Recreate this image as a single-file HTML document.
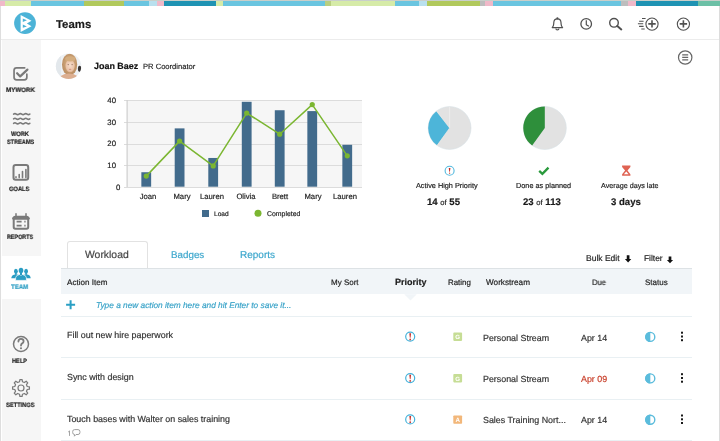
<!DOCTYPE html><html><head><meta charset="utf-8"><style>
html,body{margin:0;padding:0;}
body{width:720px;height:441px;overflow:hidden;position:relative;background:#fff;font-family:"Liberation Sans",sans-serif;text-rendering:geometricPrecision;}
.t{position:absolute;line-height:1;white-space:nowrap;will-change:transform;-webkit-text-stroke:0.18px currentColor;}
.r{position:absolute;display:block;}
</style></head><body>
<div class="r" style="left:0px;top:0px;width:720px;height:1px;background:#c9cfca;"></div>
<div class="r" style="left:0px;top:1px;width:5px;height:5px;background:#f0b9c9;"></div>
<div class="r" style="left:5px;top:1px;width:26px;height:5px;background:#d6eba8;"></div>
<div class="r" style="left:31px;top:1px;width:53px;height:5px;background:#6ac5e0;"></div>
<div class="r" style="left:84px;top:1px;width:40px;height:5px;background:#b1c95c;"></div>
<div class="r" style="left:124px;top:1px;width:25px;height:5px;background:#6ac5e0;"></div>
<div class="r" style="left:149px;top:1px;width:8px;height:5px;background:#b9e0ee;"></div>
<div class="r" style="left:157px;top:1px;width:7px;height:5px;background:#f0b9c9;"></div>
<div class="r" style="left:164px;top:1px;width:52px;height:5px;background:#1f93b3;"></div>
<div class="r" style="left:216px;top:1px;width:7px;height:5px;background:#d6eba8;"></div>
<div class="r" style="left:223px;top:1px;width:102px;height:5px;background:#6ac5e0;"></div>
<div class="r" style="left:325px;top:1px;width:6px;height:5px;background:#b9cf80;"></div>
<div class="r" style="left:331px;top:1px;width:63.5px;height:5px;background:#d6eba8;"></div>
<div class="r" style="left:394.5px;top:1px;width:24.5px;height:5px;background:#6ac5e0;"></div>
<div class="r" style="left:419px;top:1px;width:8px;height:5px;background:#b9e0ee;"></div>
<div class="r" style="left:427px;top:1px;width:53px;height:5px;background:#b1c95c;"></div>
<div class="r" style="left:480px;top:1px;width:5px;height:5px;background:#bdbdbd;"></div>
<div class="r" style="left:485px;top:1px;width:7.5px;height:5px;background:#f0b9c9;"></div>
<div class="r" style="left:492.5px;top:1px;width:128.5px;height:5px;background:#6ac5e0;"></div>
<div class="r" style="left:621px;top:1px;width:7px;height:5px;background:#bdbdbd;"></div>
<div class="r" style="left:628px;top:1px;width:7.5px;height:5px;background:#f0b9c9;"></div>
<div class="r" style="left:635.5px;top:1px;width:62.5px;height:5px;background:#1f93b3;"></div>
<div class="r" style="left:698px;top:1px;width:22px;height:5px;background:#6cc0a6;"></div>
<div class="r" style="left:0px;top:39px;width:720px;height:1px;background:#ececec;"></div>
<div class="r" style="left:719px;top:6px;width:1px;height:435px;background:#dcdcdc;"></div>
<div class="r" style="left:0px;top:6px;width:1px;height:435px;background:#dedede;"></div>
<div class="r" style="left:2px;top:40px;width:39px;height:401px;background:#f6f6f6;"></div>
<div class="r" style="left:2px;top:256px;width:39px;height:43px;background:#ffffff;"></div>
<svg class="r" style="left:0px;top:0px" width="50" height="40" viewBox="0 0 50 40"><circle cx="25" cy="23.1" r="10.9" fill="#4cb3d7"/><path d="M20.62 15.08 L31.5 20.8 L26.88 23.52 L31.5 26.24 L20.62 31.95 Z" fill="#fff"/><path d="M22.8 18.62 L26.88 20.36 L22.8 21.88 Z M22.8 24.61 L26.88 26.51 L22.8 27.87 Z" fill="#4cb3d7"/></svg>
<div class="t" style="left:56.00px;top:20px;font-size:11.4px;font-weight:bold;color:#1a1a1a;font-style:normal;">Teams</div>
<svg class="r" style="left:540px;top:6px" width="180" height="33" viewBox="540 6 180 33"><g fill="none" stroke="#505050" stroke-width="1.2" stroke-linejoin="round"><path d="M552.2 27.6 Q553.6 26.3 553.7 24 L553.8 22.5 C553.9 19.8 555.5 18.8 557.4 18.8 C559.3 18.8 560.9 19.8 561 22.5 L561.1 24 Q561.2 26.3 562.6 27.6 Z"/><path d="M555.9 28.4 A1.5 1.5 0 0 0 558.9 28.4"/><circle cx="557.4" cy="18.4" r="0.5"/><circle cx="586.2" cy="23.9" r="5.3" stroke-width="1.3"/><path d="M586.3 20.3 L586.3 24.7 L588.9 26.2"/><circle cx="614" cy="22.85" r="4.3" stroke-width="1.4"/><path d="M617.3 26 L621.3 29.4" stroke-width="2" stroke-linecap="round"/><circle cx="652" cy="24.1" r="6.1" stroke-width="1.1"/><path d="M648.3 23.9 H655.7 M652 20.2 V27.6" stroke-width="1.6"/><path d="M642 18.5 H645.6 M639.1 21.2 H643.6 M637.9 23.8 H643.2 M639.1 26.4 H643.6 M641.3 29 H644.7" stroke-width="1.1"/><circle cx="683.4" cy="24.1" r="6.1" stroke-width="1.1"/><path d="M679.7 23.9 H687.1 M683.4 20.2 V27.6" stroke-width="1.6"/></g></svg>
<svg class="r" style="left:0px;top:40px" width="41" height="400" viewBox="0 40 41 400"><g fill="none" stroke="#7a7a7a" stroke-linecap="round" stroke-linejoin="round"><path d="M24.7 67.85 L16.55 67.85 Q14.05 67.85 14.05 70.35 L14.05 77.35 Q14.05 79.85 16.55 79.85 L24.35 79.85 Q26.85 79.85 26.85 77.35 L26.85 74.2" stroke-width="1.7"/><path d="M17.1 73.2 L20.2 76.4 L27.4 69.6" stroke-width="2.2"/><path d="M13.6 114.1 q1.35 -1.1 2.7 0 t2.7 0 t2.7 0 t2.7 0 t2.7 0 t2.7 0 M13.6 118.8 q1.35 -1.1 2.7 0 t2.7 0 t2.7 0 t2.7 0 t2.7 0 t2.7 0 M13.6 123.3 q1.35 -1.1 2.7 0 t2.7 0 t2.7 0 t2.7 0 t2.7 0 t2.7 0" stroke-width="1.6"/><rect x="13.5" y="165" width="14.7" height="14.7" rx="2.2" stroke-width="2"/><path d="M16 176.9 V177.6 M19.2 174.6 V177.6 M22.5 171.6 V177.6 M25.9 169.6 V177.6" stroke-width="1.6"/><rect x="13.7" y="216.7" width="14.5" height="12" rx="1.6" stroke-width="2"/><path d="M13.7 218.2 H28.2" stroke-width="3"/><path d="M16 213.8 V216 M26 213.8 V216" stroke-width="1.5"/><path d="M16.6 221.7 H21.6 M24.3 221.7 H25.6 M16.6 225.7 H21.6 M24.3 225.7 H25.6" stroke-width="1.7" stroke-linecap="butt"/><circle cx="21" cy="344" r="7.5" stroke-width="1.5"/><path d="M18.4 341.6 Q18.4 338.9 21 338.9 Q23.6 338.9 23.6 341.3 Q23.6 342.7 22.2 343.4 Q21 344.1 21 345.6" stroke-width="1.8"/><path d="M19.51 381.78 L19.87 379.58 L22.13 379.58 L22.49 381.78 L24.34 382.54 L26.16 381.24 L27.76 382.84 L26.46 384.66 L27.22 386.51 L29.42 386.87 L29.42 389.13 L27.22 389.49 L26.46 391.34 L27.76 393.16 L26.16 394.76 L24.34 393.46 L22.49 394.22 L22.13 396.42 L19.87 396.42 L19.51 394.22 L17.66 393.46 L15.84 394.76 L14.24 393.16 L15.54 391.34 L14.78 389.49 L12.58 389.13 L12.58 386.87 L14.78 386.51 L15.54 384.66 L14.24 382.84 L15.84 381.24 L17.66 382.54 Z" stroke-width="1.2"/><circle cx="21" cy="388" r="3" stroke-width="1.2"/></g><circle cx="21" cy="348.3" r="1.05" fill="#7a7a7a"/></svg>
<svg class="r" style="left:0px;top:256px" width="41" height="43" viewBox="0 256 41 43"><g fill="#2a9dc3"><ellipse cx="15.9" cy="271.3" rx="1.9" ry="2.5"/><ellipse cx="26.1" cy="271.3" rx="1.9" ry="2.5"/><rect x="15.1" y="272.5" width="1.6" height="2.5"/><rect x="25.3" y="272.5" width="1.6" height="2.5"/><path d="M11.3 278.2 Q11.4 275.2 14.6 274.4 L15.9 275 L17.2 274.4 Q18.5 274.7 19.5 275.6 L19.5 278.2 Z"/><path d="M30.7 278.2 Q30.6 275.2 27.4 274.4 L26.1 275 L24.8 274.4 Q23.5 274.7 22.5 275.6 L22.5 278.2 Z"/></g><g fill="#2a9dc3" stroke="#fff" stroke-width="0.7"><path d="M15.6 280.4 L15.6 277.8 Q15.8 275.3 19.4 274.5 L21 275.2 L22.6 274.5 Q26.2 275.3 26.4 277.8 L26.4 280.4 Z"/></g><g fill="#2a9dc3"><ellipse cx="21" cy="270.5" rx="2.3" ry="2.7"/><rect x="20" y="272" width="2" height="3"/></g></svg>
<div class="t" style="left:5.80px;top:88px;font-size:6.4px;font-weight:bold;color:#1c1c1c;font-style:normal;transform:scaleX(0.973);transform-origin:0 0;">MYWORK</div>
<div class="t" style="left:11.00px;top:132px;font-size:6.4px;font-weight:bold;color:#1c1c1c;font-style:normal;transform:scaleX(0.887);transform-origin:0 0;">WORK</div>
<div class="t" style="left:6.50px;top:140px;font-size:6.4px;font-weight:bold;color:#1c1c1c;font-style:normal;transform:scaleX(0.869);transform-origin:0 0;">STREAMS</div>
<div class="t" style="left:9.40px;top:187px;font-size:6.4px;font-weight:bold;color:#1c1c1c;font-style:normal;transform:scaleX(0.895);transform-origin:0 0;">GOALS</div>
<div class="t" style="left:6.80px;top:235px;font-size:6.4px;font-weight:bold;color:#1c1c1c;font-style:normal;transform:scaleX(0.844);transform-origin:0 0;">REPORTS</div>
<div class="t" style="left:10.90px;top:285px;font-size:6.4px;font-weight:bold;color:#2a9dc3;font-style:normal;transform:scaleX(0.950);transform-origin:0 0;">TEAM</div>
<div class="t" style="left:11.70px;top:359px;font-size:6.4px;font-weight:bold;color:#1c1c1c;font-style:normal;transform:scaleX(0.878);transform-origin:0 0;">HELP</div>
<div class="t" style="left:5.80px;top:403px;font-size:6.4px;font-weight:bold;color:#1c1c1c;font-style:normal;transform:scaleX(0.894);transform-origin:0 0;">SETTINGS</div>
<svg class="r" style="left:52px;top:50px" width="34" height="34" viewBox="52 50 34 34"><defs><clipPath id="av"><circle cx="68.6" cy="66.2" r="12.7"/></clipPath><radialGradient id="face" cx="0.5" cy="0.45" r="0.55"><stop offset="0" stop-color="#f6dccb"/><stop offset="0.8" stop-color="#eac3a8"/><stop offset="1" stop-color="#dcae8c"/></radialGradient><radialGradient id="hair" cx="0.5" cy="0.45" r="0.55"><stop offset="0" stop-color="#dcb68a"/><stop offset="1" stop-color="#b98c60"/></radialGradient></defs><g clip-path="url(#av)"><rect x="55" y="52" width="28" height="28" fill="#eef1f4"/><rect x="55" y="52" width="6" height="28" fill="#e3e8ec"/><ellipse cx="79.6" cy="68.8" rx="1.7" ry="3" fill="#3a3634"/><ellipse cx="69.6" cy="64.5" rx="7.6" ry="10.8" fill="url(#hair)"/><ellipse cx="69" cy="81" rx="11" ry="7.5" fill="#dcae90"/><ellipse cx="70.1" cy="66" rx="4.7" ry="6.3" fill="url(#face)"/><ellipse cx="70.3" cy="58.8" rx="5.2" ry="2.6" fill="#d4ad7f"/><circle cx="68.2" cy="64.6" r="0.6" fill="#8a6a58"/><circle cx="72.1" cy="64.6" r="0.6" fill="#8a6a58"/><ellipse cx="70.1" cy="69.2" rx="1.3" ry="0.5" fill="#cf8a7a"/></g></svg>
<div class="t" style="left:94.40px;top:62px;font-size:8.95px;font-weight:bold;color:#111;font-style:normal;">Joan Baez</div>
<div class="t" style="left:143.30px;top:63px;font-size:7.6px;font-weight:normal;color:#1a1a1a;font-style:normal;-webkit-text-stroke:0.15px #1a1a1a;">PR Coordinator</div>
<div class="r" style="left:127px;top:100px;width:235px;height:87px;background:#f6f6f6"></div>
<svg class="r" style="left:100px;top:95px" width="270" height="100" viewBox="100 95 270 100"><rect x="124" y="100" width="238" height="1" fill="#dcdcdc"/><rect x="124" y="122" width="238" height="1" fill="#dcdcdc"/><rect x="124" y="144" width="238" height="1" fill="#dcdcdc"/><rect x="124" y="165" width="238" height="1" fill="#dcdcdc"/><rect x="124" y="187" width="238" height="1" fill="#dcdcdc"/><rect x="126.5" y="100" width="1.2" height="87" fill="#cfcfcf"/><rect x="141.35" y="172.23" width="9.8" height="14.47" fill="#426b8c"/><rect x="174.70" y="128.38" width="9.8" height="58.32" fill="#426b8c"/><rect x="208.30" y="157.97" width="9.8" height="28.73" fill="#426b8c"/><rect x="241.80" y="101.81" width="9.8" height="84.89" fill="#426b8c"/><rect x="274.80" y="110.24" width="9.8" height="76.46" fill="#426b8c"/><rect x="307.35" y="111.10" width="9.8" height="75.60" fill="#426b8c"/><rect x="342.35" y="144.80" width="9.8" height="41.90" fill="#426b8c"/><polyline points="146.25,176.12 179.60,141.12 213.20,165.96 246.70,113.04 279.70,134.21 312.25,104.62 347.25,155.81" fill="none" stroke="#7bb631" stroke-width="1.5" stroke-linejoin="round"/><circle cx="146.25" cy="176.12" r="2.6" fill="#7bb631"/><circle cx="179.60" cy="141.12" r="2.6" fill="#7bb631"/><circle cx="213.20" cy="165.96" r="2.6" fill="#7bb631"/><circle cx="246.70" cy="113.04" r="2.6" fill="#7bb631"/><circle cx="279.70" cy="134.21" r="2.6" fill="#7bb631"/><circle cx="312.25" cy="104.62" r="2.6" fill="#7bb631"/><circle cx="347.25" cy="155.81" r="2.6" fill="#7bb631"/></svg>
<div class="t" style="left:60.00px;top:97px;font-size:7.8px;font-weight:normal;color:#222;font-style:normal;width:56px;text-align:right;">40</div>
<div class="t" style="left:60.00px;top:119px;font-size:7.8px;font-weight:normal;color:#222;font-style:normal;width:56px;text-align:right;">30</div>
<div class="t" style="left:60.00px;top:140px;font-size:7.8px;font-weight:normal;color:#222;font-style:normal;width:56px;text-align:right;">20</div>
<div class="t" style="left:60.00px;top:162px;font-size:7.8px;font-weight:normal;color:#222;font-style:normal;width:56px;text-align:right;">10</div>
<div class="t" style="left:60.00px;top:184px;font-size:7.8px;font-weight:normal;color:#222;font-style:normal;width:60.4px;text-align:right;">0</div>
<div class="t" style="left:117.50px;top:193px;font-size:7.7px;font-weight:normal;color:#222;font-style:normal;width:60px;text-align:center;">Joan</div>
<div class="t" style="left:152.00px;top:193px;font-size:7.7px;font-weight:normal;color:#222;font-style:normal;width:60px;text-align:center;">Mary</div>
<div class="t" style="left:182.30px;top:193px;font-size:7.7px;font-weight:normal;color:#222;font-style:normal;width:60px;text-align:center;">Lauren</div>
<div class="t" style="left:216.25px;top:193px;font-size:7.7px;font-weight:normal;color:#222;font-style:normal;width:60px;text-align:center;">Olivia</div>
<div class="t" style="left:250.40px;top:193px;font-size:7.7px;font-weight:normal;color:#222;font-style:normal;width:60px;text-align:center;">Brett</div>
<div class="t" style="left:282.50px;top:193px;font-size:7.7px;font-weight:normal;color:#222;font-style:normal;width:60px;text-align:center;">Mary</div>
<div class="t" style="left:315.20px;top:193px;font-size:7.7px;font-weight:normal;color:#222;font-style:normal;width:60px;text-align:center;">Lauren</div>
<div class="r" style="left:201.7px;top:210px;width:7px;height:6.7px;background:#426b8c;"></div>
<div class="t" style="left:214.20px;top:212px;font-size:6.6px;font-weight:normal;color:#222;font-style:normal;">Load</div>
<svg class="r" style="left:250px;top:205px" width="20" height="15" viewBox="250 205 20 15"><circle cx="258" cy="213.3" r="3.5" fill="#7bb631"/></svg>
<div class="t" style="left:267.00px;top:212px;font-size:6.9px;font-weight:normal;color:#222;font-style:normal;">Completed</div>
<svg class="r" style="left:420px;top:100px" width="60" height="60" viewBox="420 100 60 60"><circle cx="449.6" cy="128" r="21.4" fill="#e2e2e2" stroke="#d6e0e6" stroke-width="0.6"/><path d="M449.6 128 L436.42 111.14 A21.4 21.4 0 0 0 437.02 145.31 Z" fill="#4db5d9"/><path d="M449.6 106.6 V128" stroke="#f2f2f2" stroke-width="0.6"/><path d="M449.6 128 L436.4 110.9 M449.6 128 L437 145.6" stroke="#f5ece6" stroke-width="0.6"/></svg>
<svg class="r" style="left:515px;top:100px" width="60" height="60" viewBox="515 100 60 60"><circle cx="544.8" cy="128" r="21.5" fill="#e2e2e2" stroke="#d6e0e6" stroke-width="0.6"/><path d="M544.8 128 L544.80 106.50 A21.5 21.5 0 0 0 532.16 145.39 Z" fill="#2e8f3b"/></svg>
<svg class="r" style="left:440px;top:160px" width="20" height="20" viewBox="440 160 20 20"><circle cx="449.6" cy="170.8" r="4.5" fill="#fff" stroke="#52b8de" stroke-width="1.1"/><path d="M448.75 167.90 L450.45 167.90 L449.90 171.70 L449.30 171.70 Z" fill="#c42a22"/><circle cx="449.6" cy="173.20" r="0.65" fill="#d0452e"/></svg>
<div class="t" style="left:416.10px;top:182px;font-size:7.3px;font-weight:normal;color:#222;font-style:normal;">Active High Priority</div>
<div class="t" style="left:427.20px;top:198px;font-size:9.6px;font-weight:bold;color:#1a1a1a;font-style:normal;">14 <span style="font-size:7.6px;font-weight:normal">of</span> 55</div>
<svg class="r" style="left:530px;top:160px" width="25" height="20" viewBox="530 160 25 20"><path d="M539.2 170.8 L542.4 173.8 L548.5 167.6" fill="none" stroke="#2a9a3c" stroke-width="2.3" stroke-linecap="butt" stroke-linejoin="miter"/></svg>
<div class="t" style="left:516.00px;top:182px;font-size:7.3px;font-weight:normal;color:#222;font-style:normal;">Done as planned</div>
<div class="t" style="left:522.80px;top:198px;font-size:9.6px;font-weight:bold;color:#1a1a1a;font-style:normal;">23 <span style="font-size:7.6px;font-weight:normal">of</span> 113</div>
<svg class="r" style="left:615px;top:160px" width="25" height="20" viewBox="615 160 25 20"><path d="M622.1 165.6 H630.4 V167 L627.5 170.6 L630.4 174.3 V175.7 H622.1 V174.3 L625.1 170.6 L622.1 167 Z" fill="#df6353"/><path d="M623.9 174.2 L626.25 171.4 L628.6 174.2 Z" fill="#fff"/></svg>
<div class="t" style="left:601.10px;top:182px;font-size:7.2px;font-weight:normal;color:#222;font-style:normal;">Average days late</div>
<div class="t" style="left:611.10px;top:198px;font-size:9.6px;font-weight:bold;color:#1a1a1a;font-style:normal;">3 days</div>
<svg class="r" style="left:670px;top:45px" width="30" height="25" viewBox="670 45 30 25"><circle cx="685.2" cy="57.5" r="6.7" fill="none" stroke="#666" stroke-width="1.2"/><path d="M682.2 54.9 H688.2 M682.2 57.4 H688.2 M682.2 59.9 H688.2" stroke="#666" stroke-width="1.1"/></svg>
<div class="r" style="left:67px;top:241px;width:79px;height:28px;background:#fff;border:1px solid #e2e2e2;border-bottom:none;border-radius:3px 3px 0 0;box-sizing:content-box"></div>
<div class="t" style="left:85.30px;top:251px;font-size:10.4px;font-weight:normal;color:#444;font-style:normal;">Workload</div>
<div class="t" style="left:171.20px;top:251px;font-size:9.8px;font-weight:normal;color:#3ba6cc;font-style:normal;">Badges</div>
<div class="t" style="left:240.30px;top:251px;font-size:10.0px;font-weight:normal;color:#3ba6cc;font-style:normal;">Reports</div>
<div class="t" style="left:585.80px;top:254px;font-size:8.5px;font-weight:normal;color:#222;font-style:normal;">Bulk Edit</div>
<div class="t" style="left:643.90px;top:254px;font-size:8.4px;font-weight:normal;color:#222;font-style:normal;">Filter</div>
<svg class="r" style="left:620px;top:250px" width="60" height="20" viewBox="620 250 60 20"><path d="M626.75 255.3 H629.45 V258.90 H631.30 L628.10 262.5 L624.9 258.90 H626.75 Z" fill="#111"/><path d="M668.65 256.6 H671.35 V259.90 H673.10 L670.00 263.20000000000005 L666.9 259.90 H668.65 Z" fill="#111"/></svg>
<div class="r" style="left:60.6px;top:268px;width:631.6px;height:1px;background:#dde2e5;"></div>
<div class="r" style="left:60.6px;top:269px;width:631.6px;height:25.2px;background:#f1f5f8;"></div>
<svg class="r" style="left:400px;top:294px" width="20" height="10" viewBox="400 294 20 10"><path d="M404.2 294.2 L410.5 300.6 L416.8 294.2 Z" fill="#f1f5f8"/></svg>
<div class="t" style="left:67.20px;top:279px;font-size:8.1px;font-weight:normal;color:#222;font-style:normal;">Action Item</div>
<div class="t" style="left:330.60px;top:279px;font-size:8.0px;font-weight:normal;color:#222;font-style:normal;">My Sort</div>
<div class="t" style="left:395.30px;top:278px;font-size:9.0px;font-weight:bold;color:#1a1a1a;font-style:normal;">Priority</div>
<div class="t" style="left:448.00px;top:279px;font-size:7.9px;font-weight:normal;color:#222;font-style:normal;">Rating</div>
<div class="t" style="left:485.60px;top:279px;font-size:8.2px;font-weight:normal;color:#222;font-style:normal;">Workstream</div>
<div class="t" style="left:591.50px;top:279px;font-size:8.0px;font-weight:normal;color:#222;font-style:normal;transform:scaleX(0.950);transform-origin:0 0;">Due</div>
<div class="t" style="left:645.30px;top:279px;font-size:8.0px;font-weight:normal;color:#222;font-style:normal;">Status</div>
<svg class="r" style="left:60px;top:295px" width="20" height="20" viewBox="60 295 20 20"><path d="M66.1 304.8 H75.1 M70.6 300.3 V309.3" stroke="#2a9fc4" stroke-width="2"/></svg>
<div class="t" style="left:96.00px;top:301px;font-size:8.3px;font-weight:normal;color:#3aa3c8;font-style:italic;">Type a new action item here and hit Enter to save it...</div>
<div class="r" style="left:60.6px;top:315.5px;width:631.6px;height:1px;background:#e9f0f3;"></div>
<div class="r" style="left:60.6px;top:357px;width:631.6px;height:1px;background:#e9f0f3;"></div>
<div class="r" style="left:60.6px;top:398.6px;width:631.6px;height:1px;background:#e9f0f3;"></div>
<div class="r" style="left:60.6px;top:439.5px;width:631.6px;height:1px;background:#e9f0f3;"></div>
<div class="t" style="left:67.30px;top:331px;font-size:8.9px;font-weight:normal;color:#333;font-style:normal;">Fill out new hire paperwork</div>
<div class="t" style="left:482.90px;top:334px;font-size:8.9px;font-weight:normal;color:#333;font-style:normal;">Personal Stream</div>
<div class="t" style="left:580.80px;top:334px;font-size:8.9px;font-weight:normal;color:#333;font-style:normal;">Apr 14</div>
<svg class="r" style="left:400px;top:326px" width="290" height="20" viewBox="400 326 290 20"><circle cx="410.2" cy="336.6" r="4.5" fill="#fff" stroke="#45b2da" stroke-width="1.2"/><path d="M409.30 333.30 L411.10 333.30 L410.55 337.70 L409.85 337.70 Z" fill="#c9302a"/><circle cx="410.2" cy="339.40" r="0.85" fill="#c9302a"/><rect x="453.3" y="332.6" width="8.8" height="8.3" rx="0.8" fill="#c6dd95"/><text x="457.7" y="339.0" font-family="Liberation Sans" font-weight="bold" font-size="6.2" fill="#fff" text-anchor="middle">G</text><circle cx="650.3" cy="336.90000000000003" r="4.5" fill="#fff" stroke="#5bbcdc" stroke-width="1.4"/><path d="M650.3 331.70000000000005 A5.2 5.2 0 0 0 650.3 342.1 Z" fill="#5bbcdc"/><rect x="681.00" y="331.70" width="2" height="2" fill="#1a1a1a"/><rect x="681.00" y="335.50" width="2" height="2" fill="#1a1a1a"/><rect x="681.00" y="339.20" width="2" height="2" fill="#1a1a1a"/></svg>
<div class="t" style="left:67.30px;top:373px;font-size:8.9px;font-weight:normal;color:#333;font-style:normal;">Sync with design</div>
<div class="t" style="left:482.90px;top:375px;font-size:8.9px;font-weight:normal;color:#333;font-style:normal;">Personal Stream</div>
<div class="t" style="left:580.80px;top:375px;font-size:8.9px;font-weight:normal;color:#c9412c;font-style:normal;">Apr 09</div>
<svg class="r" style="left:400px;top:368px" width="290" height="20" viewBox="400 368 290 20"><circle cx="410.2" cy="378.1" r="4.5" fill="#fff" stroke="#45b2da" stroke-width="1.2"/><path d="M409.30 374.80 L411.10 374.80 L410.55 379.20 L409.85 379.20 Z" fill="#c9302a"/><circle cx="410.2" cy="380.90" r="0.85" fill="#c9302a"/><rect x="453.3" y="374.1" width="8.8" height="8.3" rx="0.8" fill="#c6dd95"/><text x="457.7" y="380.5" font-family="Liberation Sans" font-weight="bold" font-size="6.2" fill="#fff" text-anchor="middle">G</text><circle cx="650.3" cy="378.40000000000003" r="4.5" fill="#fff" stroke="#5bbcdc" stroke-width="1.4"/><path d="M650.3 373.20000000000005 A5.2 5.2 0 0 0 650.3 383.6 Z" fill="#5bbcdc"/><rect x="681.00" y="373.20" width="2" height="2" fill="#1a1a1a"/><rect x="681.00" y="377.00" width="2" height="2" fill="#1a1a1a"/><rect x="681.00" y="380.70" width="2" height="2" fill="#1a1a1a"/></svg>
<div class="t" style="left:67.30px;top:415px;font-size:8.9px;font-weight:normal;color:#333;font-style:normal;">Touch bases with Walter on sales training</div>
<div class="t" style="left:482.90px;top:416px;font-size:8.9px;font-weight:normal;color:#333;font-style:normal;">Sales Training Nort...</div>
<div class="t" style="left:580.80px;top:416px;font-size:8.9px;font-weight:normal;color:#333;font-style:normal;">Apr 14</div>
<svg class="r" style="left:400px;top:409px" width="290" height="20" viewBox="400 409 290 20"><circle cx="410.2" cy="419.4" r="4.5" fill="#fff" stroke="#45b2da" stroke-width="1.2"/><path d="M409.30 416.10 L411.10 416.10 L410.55 420.50 L409.85 420.50 Z" fill="#c9302a"/><circle cx="410.2" cy="422.20" r="0.85" fill="#c9302a"/><rect x="453.3" y="415.4" width="8.8" height="8.3" rx="0.8" fill="#f2b77a"/><text x="457.7" y="421.79999999999995" font-family="Liberation Sans" font-weight="bold" font-size="6.2" fill="#fff" text-anchor="middle">A</text><circle cx="650.3" cy="419.7" r="4.5" fill="#fff" stroke="#5bbcdc" stroke-width="1.4"/><path d="M650.3 414.5 A5.2 5.2 0 0 0 650.3 424.9 Z" fill="#5bbcdc"/><rect x="681.00" y="414.50" width="2" height="2" fill="#1a1a1a"/><rect x="681.00" y="418.30" width="2" height="2" fill="#1a1a1a"/><rect x="681.00" y="422.00" width="2" height="2" fill="#1a1a1a"/></svg>
<svg class="r" style="left:66px;top:428px" width="6" height="10" viewBox="66 428 6 10"><path d="M68.2 432 L69.5 430.9 V435.9" fill="none" stroke="#9a9a9a" stroke-width="0.9"/></svg>
<svg class="r" style="left:70px;top:427px" width="12" height="12" viewBox="70 427 12 12"><path d="M74.6 429.6 H78 Q79.9 429.6 79.9 431.5 V432.6 Q79.9 434.5 78 434.5 H76 L74.4 436.2 L74.5 434.5 Q72.7 434.4 72.7 432.6 V431.5 Q72.7 429.6 74.6 429.6 Z" fill="none" stroke="#9a9a9a" stroke-width="0.95" stroke-linejoin="round"/></svg>
</body></html>
